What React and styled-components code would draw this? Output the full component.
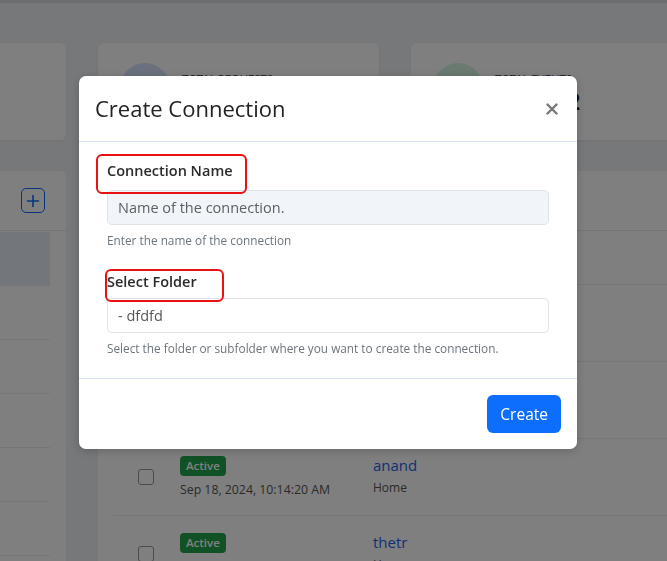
import React from 'react'
import styled, { createGlobalStyle } from 'styled-components'

const GlobalStyle = createGlobalStyle`
  body {
    margin: 0;
    background: #eef0f4;
    font-family: 'Open Sans', Lato, sans-serif;
    overflow: hidden;
  }
`

const TopBar = styled.div`
  height: 3px;
  background: #dcdde0;
`

const Content = styled.div`
  padding-top: 40px;
`

const Grid = styled.div`
  display: grid;
  grid-template-columns: repeat(4, 281px);
  column-gap: 32px;
  row-gap: 31px;
  margin-left: -215px;
`

const StatCard = styled.div`
  height: 97px;
  background: #fff;
  border-radius: 6px;
  box-shadow: 0 1px 3px rgba(0, 0, 0, 0.05);
  display: flex;
  align-items: flex-start;
  gap: 12px;
  padding: 20px 22px;
  box-sizing: border-box;
`

const Circle = styled.div`
  width: 50px;
  height: 50px;
  border-radius: 50%;
  background: ${p => p.$color};
  flex-shrink: 0;
`

const StatText = styled.div`
  display: flex;
  flex-direction: column;
  padding-top: 9px;

  span {
    font-family: Lato, sans-serif;
    font-size: 11px;
    line-height: 14px;
    color: #555;
    text-transform: uppercase;
  }

  strong {
    font-family: Lato, sans-serif;
    font-size: 23px;
    line-height: 26px;
    font-weight: 700;
    color: #111;
    margin-top: 2px;
  }
`

const Panel = styled.div`
  background: #fff;
  border-radius: 6px;
  height: 420px;
  grid-column: ${p => p.$span || 'auto'};
`

const PanelHead = styled.div`
  height: 59px;
  border-bottom: 1px solid #e6eaf1;
  display: flex;
  align-items: center;
  justify-content: space-between;
  padding: 0 21px 0 16px;
  font-size: 15px;
  font-weight: 700;
  color: #333;
`

const AddButton = styled.button`
  width: 24px;
  height: 25px;
  border: 1.5px solid #0d6efd;
  border-radius: 5px;
  background: transparent;
  padding: 0;
  display: flex;
  align-items: center;
  justify-content: center;
`

const FolderList = styled.div`
  padding: 1px 16px 0;
`

const FolderItem = styled.div`
  height: 53px;
  border-bottom: 1px solid ${p => (p.$active ? '#e6edf5' : '#e8edf5')};
  background: ${p => (p.$active ? '#e6edf5' : 'transparent')};
  display: flex;
  align-items: center;
  padding: 0 12px;
  font-size: 13px;
  color: #333;
`

const Table = styled.div`
  padding: 0 15px;
`

const HeadRow = styled.div`
  height: 53px;
  border-bottom: 1px solid #e8edf5;
  display: grid;
  grid-template-columns: 67px 193px 1fr;
  align-items: center;
  font-size: 12px;
  font-weight: 700;
  color: #444;
`

const Row = styled.div`
  height: 76px;
  border-bottom: 1px solid #e8edf5;
  display: grid;
  grid-template-columns: 67px 193px 1fr;
`

const CheckCell = styled.div`
  display: flex;
  align-items: center;
  padding-left: 25px;
`

const Check = styled.span`
  width: 14px;
  height: 14px;
  border: 1px solid #999;
  border-radius: 3px;
  background: #fff;
`

const StatusCell = styled.div`
  padding-top: 17px;
  display: flex;
  flex-direction: column;
  align-items: flex-start;
  gap: 5px;
`

const Badge = styled.span`
  height: 20px;
  line-height: 20px;
  padding: 0 6px;
  border-radius: 4px;
  background: #22a24c;
  color: #fff;
  font-size: 11.5px;
  font-weight: 600;
`

const DateText = styled.span`
  font-size: 12.3px;
  line-height: 18px;
  color: #555;
`

const NameCell = styled.div`
  padding-top: 15px;
  display: flex;
  flex-direction: column;
  gap: 3px;

  a {
    font-size: 15px;
    line-height: 22px;
    color: #1f63e8;
    text-decoration: none;
  }

  span {
    font-size: 12px;
    line-height: 18px;
    color: #555;
  }
`

const Backdrop = styled.div`
  position: fixed;
  inset: 0;
  background: rgba(0, 0, 0, 0.5);
  display: flex;
  justify-content: center;
  align-items: flex-start;
  padding: 76px 11px 0 0;
`

const Modal = styled.div`
  width: 498px;
  background: #fff;
  border-radius: 7px;
  box-shadow: 0 2px 10px rgba(0, 0, 0, 0.2);
`

const ModalHead = styled.div`
  display: flex;
  align-items: center;
  justify-content: space-between;
  padding: 20px 18px 20px 16px;
  border-bottom: 1px solid #d9e1f5;

  h2 {
    margin: 0;
    font-size: 22px;
    line-height: 25px;
    font-weight: 500;
    color: #222;
  }
`

const Close = styled.button`
  border: 0;
  background: none;
  padding: 0;
  width: 14px;
  height: 14px;
  display: flex;
  align-items: center;
  justify-content: center;
`

const ModalBody = styled.div`
  padding: 18px 28px 21px;
`

const Field = styled.div`
  & + & {
    margin-top: 20px;
  }
`

const Label = styled.label`
  position: relative;
  z-index: 1;
  display: block;
  width: fit-content;
  border: 2px solid #e81010;
  border-radius: 6px;
  font-size: 14.5px;
  line-height: 22px;
  font-weight: 600;
  color: #2b2b2b;
  margin: ${p => p.$margin};
  padding: ${p => p.$padding};
`

const inputBase = `
  display: block;
  width: 100%;
  height: 35px;
  box-sizing: border-box;
  border: 1px solid #dfe2e6;
  border-radius: 5px;
  padding: 0 10px;
  font-family: 'Open Sans', Lato, sans-serif;
  font-size: 14.5px;
  color: #555;
  outline: none;
`

const TextInput = styled.input`
  ${inputBase}
  background: #f1f4f8;

  &::placeholder {
    color: #5b6168;
  }
`

const Select = styled.select`
  ${inputBase}
  background: #fff;
  appearance: none;
`

const Help = styled.div`
  margin-top: 7px;
  font-size: 11.8px;
  line-height: 17px;
  color: #6c757d;
`

const ModalFoot = styled.div`
  border-top: 1px solid #d9e1f5;
  padding: 16px;
  display: flex;
  justify-content: flex-end;
`

const PrimaryButton = styled.button`
  height: 38px;
  padding: 0 13px;
  border: 0;
  border-radius: 6px;
  background: #0d6efd;
  color: #fff;
  font-family: 'Open Sans', Lato, sans-serif;
  font-size: 15.5px;
`

const rows = [
  { name: 'mysql', folder: 'Home', date: 'Sep 19, 2024, 11:02:45 AM' },
  { name: 'test', folder: 'Home', date: 'Sep 18, 2024, 12:40:11 PM' },
  { name: 'anand', folder: 'Home', date: 'Sep 18, 2024, 10:14:20 AM' },
  { name: 'thetr', folder: 'Home', date: 'Sep 18, 2024, 10:02:08 AM' }
]

export default function App () {
  return (
    <>
      <GlobalStyle />
      <TopBar />
      <Content>
        <Grid>
          <StatCard>
            <Circle $color='#ffe4d1' />
            <StatText><span>Total Connections</span><strong>14</strong></StatText>
          </StatCard>
          <StatCard>
            <Circle $color='#d6e0ff' />
            <StatText><span>Total Requests</span><strong>1,204</strong></StatText>
          </StatCard>
          <StatCard>
            <Circle $color='#d5f5e0' />
            <StatText><span>Total Events</span><strong>120,452</strong></StatText>
          </StatCard>
          <StatCard>
            <Circle $color='#fde2e2' />
            <StatText><span>Total Errors</span><strong>3</strong></StatText>
          </StatCard>

          <Panel>
            <PanelHead>
              Folders
              <AddButton>
                <svg width='14' height='14' viewBox='0 0 14 14'>
                  <path d='M7 1.5v11M1.5 7h11' stroke='#0d6efd' strokeWidth='1.6' strokeLinecap='round' />
                </svg>
              </AddButton>
            </PanelHead>
            <FolderList>
              <FolderItem $active>Home</FolderItem>
              <FolderItem>dfdfd</FolderItem>
              <FolderItem>Shared</FolderItem>
              <FolderItem>Archive</FolderItem>
              <FolderItem>Reports</FolderItem>
              <FolderItem>Drafts</FolderItem>
            </FolderList>
          </Panel>

          <Panel $span='span 3'>
            <PanelHead>Connections</PanelHead>
            <Table>
              <HeadRow>
                <span />
                <span>Status</span>
                <span>Name</span>
              </HeadRow>
              {rows.map(r => (
                <Row key={r.name}>
                  <CheckCell><Check /></CheckCell>
                  <StatusCell>
                    <Badge>Active</Badge>
                    <DateText>{r.date}</DateText>
                  </StatusCell>
                  <NameCell>
                    <a href='#'>{r.name}</a>
                    <span>{r.folder}</span>
                  </NameCell>
                </Row>
              ))}
            </Table>
          </Panel>
        </Grid>
      </Content>

      <Backdrop>
        <Modal>
          <ModalHead>
            <h2>Create Connection</h2>
            <Close aria-label='Close'>
              <svg width='12' height='12' viewBox='0 0 12 12'>
                <path d='M1.5 1.5l9 9M10.5 1.5l-9 9' stroke='#777' strokeWidth='2.4' strokeLinecap='round' />
              </svg>
            </Close>
          </ModalHead>
          <ModalBody>
            <Field>
              <Label $margin='-6px 0 -4px -11px' $padding='4px 12px 10px 9px'>Connection Name</Label>
              <TextInput placeholder='Name of the connection.' />
              <Help>Enter the name of the connection</Help>
            </Field>
            <Field>
              <Label $margin='0 0 -4px -2px' $padding='0 25px 7px 0'>Select Folder</Label>
              <Select defaultValue='dfdfd'>
                <option value='dfdfd'>- dfdfd</option>
              </Select>
              <Help>Select the folder or subfolder where you want to create the connection.</Help>
            </Field>
          </ModalBody>
          <ModalFoot>
            <PrimaryButton>Create</PrimaryButton>
          </ModalFoot>
        </Modal>
      </Backdrop>
    </>
  )
}
